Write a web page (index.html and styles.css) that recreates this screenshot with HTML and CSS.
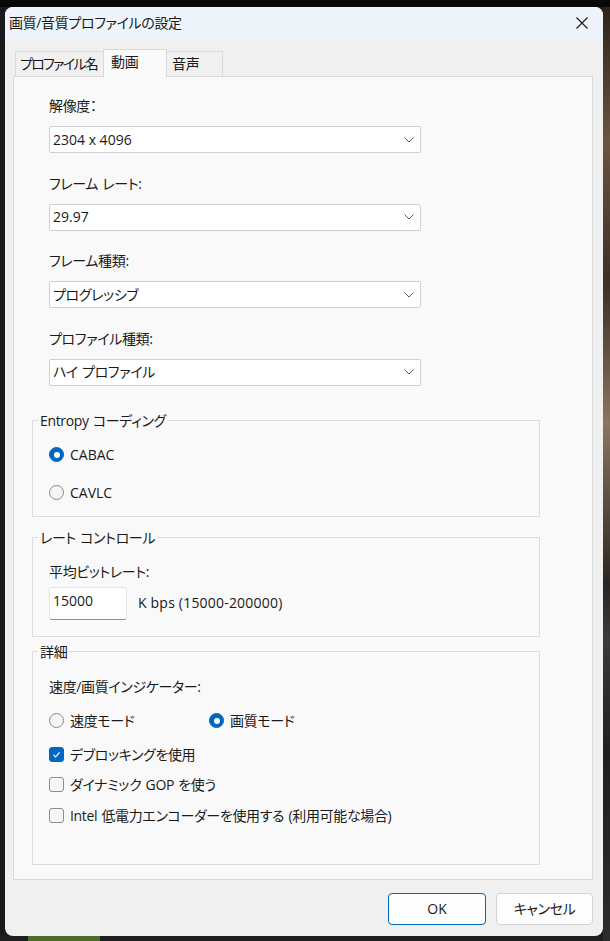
FILE: index.html
```html
<!DOCTYPE html>
<html lang="ja">
<head>
    <meta charset="UTF-8">
    <meta name="viewport" content="width=device-width, initial-scale=1.0">
    <title>画質/音質プロファイルの設定</title>
    <link rel="stylesheet" href="styles.css">
</head>
<body>
    <div class="window">
        <div class="titlebar">
            <span class="title">画質/音質プロファイルの設定</span>
            <svg class="close" width="12" height="12" viewBox="0 0 12 12">
                <path d="M0.5 0.5 L11.5 11.5 M11.5 0.5 L0.5 11.5" stroke="#1a1a1a" stroke-width="1.1" fill="none"/>
            </svg>
        </div>

        <div class="content">
            <div class="tabs">
                <div class="tab tab-profile">プロファイル名</div>
                <div class="tab tab-video active">動画</div>
                <div class="tab tab-audio">音声</div>
            </div>

            <div class="panel">
                <div class="field">
                    <div class="label">解像度：</div>
                    <div class="combo">
                        <span class="latin">2304 x 4096</span>
                        <svg width="10" height="6" viewBox="0 0 10 6"><path d="M0.5 0.5 L5 5 L9.5 0.5" stroke="#5c5c5c" fill="none"/></svg>
                    </div>
                </div>
                <div class="field">
                    <div class="label">フレーム レート:</div>
                    <div class="combo">
                        <span class="latin">29.97</span>
                        <svg width="10" height="6" viewBox="0 0 10 6"><path d="M0.5 0.5 L5 5 L9.5 0.5" stroke="#5c5c5c" fill="none"/></svg>
                    </div>
                </div>
                <div class="field">
                    <div class="label">フレーム種類:</div>
                    <div class="combo">
                        <span>プログレッシブ</span>
                        <svg width="10" height="6" viewBox="0 0 10 6"><path d="M0.5 0.5 L5 5 L9.5 0.5" stroke="#5c5c5c" fill="none"/></svg>
                    </div>
                </div>
                <div class="field">
                    <div class="label">プロファイル種類:</div>
                    <div class="combo">
                        <span>ハイ プロファイル</span>
                        <svg width="10" height="6" viewBox="0 0 10 6"><path d="M0.5 0.5 L5 5 L9.5 0.5" stroke="#5c5c5c" fill="none"/></svg>
                    </div>
                </div>

                <fieldset class="group group-entropy">
                    <legend>Entropy コーディング</legend>
                    <div class="option latin"><span class="radio on"></span>CABAC</div>
                    <div class="option latin second"><span class="radio"></span>CAVLC</div>
                </fieldset>

                <fieldset class="group group-rate">
                    <legend>レート コントロール</legend>
                    <div class="label">平均ビットレート:</div>
                    <div class="bitrate">
                        <div class="textbox latin">15000</div>
                        <span class="unit latin">K bps (15000-200000)</span>
                    </div>
                </fieldset>

                <fieldset class="group group-detail">
                    <legend>詳細</legend>
                    <div class="label">速度/画質インジケーター:</div>
                    <div class="radio-row">
                        <div class="option mode"><span class="radio"></span>速度モード</div>
                        <div class="option"><span class="radio on"></span>画質モード</div>
                    </div>
                    <div class="option check-1">
                        <span class="checkbox on">
                            <svg width="13" height="13" viewBox="0 0 13 13"><path d="M3.5 6.8 L5.6 8.9 L9.6 4.3" stroke="#fff" stroke-width="1.2" fill="none"/></svg>
                        </span>デブロッキングを使用</div>
                    <div class="option check-2"><span class="checkbox"></span>ダイナミック GOP を使う</div>
                    <div class="option check-3"><span class="checkbox"></span>Intel 低電力エンコーダーを使用する (利用可能な場合)</div>
                </fieldset>
            </div>

            <div class="actions">
                <div class="button default latin">OK</div>
                <div class="button cancel">キャンセル</div>
            </div>
        </div>
    </div>
</body>
</html>
```

FILE: styles.css
```css
html
{
    margin: 0;
    padding: 0;
}

body
{
    margin: 0;
    height: 941px;
    overflow: hidden;
    font-family: "Open Sans", "Noto Sans CJK JP", sans-serif;
    font-size: 14px;
    color: #1a1a1a;
    font-feature-settings: "palt";
    letter-spacing: -0.35px;
    word-spacing: 1px;
    background:
        linear-gradient(#080808, #080808) top left / 100% 7px no-repeat,
        linear-gradient(to bottom, #2a2018 0%, #6b5440 15%, #3d2f25 30%, #8a7560 45%, #2b2622 62%, #3a3a3a 68%, #1f1f1f 80%, #2c2c2c 100%) top right / 7px 100% no-repeat,
        linear-gradient(90deg, #1e1e1e 0, #1e1e1e 28px, #4c6b2a 28px, #4c6b2a 100px, #1e1e1e 100px) bottom left / 100% 5px no-repeat,
        #1a1a1a;
}

.latin
{
    letter-spacing: normal;
    word-spacing: normal;
}

.window
{
    width: 598px;
    height: 929px;
    margin: 7px 0 0 5px;
    border-radius: 8px;
    background-color: #f0f0f0;
    overflow: hidden;
}

.titlebar
{
    height: 32px;
    background-color: #eef4f9;
    display: flex;
    align-items: center;
    justify-content: space-between;
    padding: 0 15px 0 4px;
}

.title
{
    line-height: 20px;
}

.content
{
    padding: 10px 10px 0 8px;
}

.tabs
{
    display: flex;
    align-items: flex-end;
    height: 27px;
    padding-left: 2px;
}

.tab
{
    box-sizing: border-box;
    height: 25px;
    border: 1px solid #d9d9d9;
    border-bottom: none;
    background-color: #f0f0f0;
    line-height: 24px;
    padding-left: 5px;
    white-space: nowrap;
    overflow: hidden;
}

.tab + .tab
{
    margin-left: -1px;
}

.tab-profile
{
    width: 89px;
    padding-left: 4px;
    letter-spacing: -1.7px;
}

.tab-video { width: 64px; }
.tab-audio { width: 57px; }

.tab.active
{
    height: 28px;
    margin-bottom: -1px;
    background-color: #f9f9f9;
    position: relative;
    z-index: 1;
    padding-left: 7px;
    line-height: 24px;
}

.panel
{
    box-sizing: border-box;
    height: 804px;
    border: 1px solid #d9d9d9;
    background-color: #f9f9f9;
    padding: 19px 52px 0 18px;
}

.label
{
    line-height: 20px;
}

.field
{
    margin-left: 17px;
}

.field + .field
{
    margin-top: 20.5px;
}

.field .label
{
    margin-bottom: 10px;
}

.combo
{
    box-sizing: border-box;
    width: 372px;
    height: 27px;
    border: 1px solid #d0d0d0;
    border-radius: 2px;
    background-color: #fff;
    display: flex;
    align-items: center;
    justify-content: space-between;
    padding: 0 6px 0 3px;
    line-height: 20px;
}

.group
{
    margin: 0;
    border: 1px solid #dcdcdc;
    padding: 14px 16px 13px;
}

.group legend
{
    padding: 0 2px;
    margin-left: -11px;
    line-height: 20px;
}

.group-entropy
{
    margin-top: 25px;
}

.group-rate
{
    margin-top: 11px;
    padding-bottom: 16px;
}

.group-detail
{
    margin-top: 5px;
    padding-top: 15px;
    padding-bottom: 38px;
}

.option
{
    display: flex;
    align-items: center;
    gap: 6px;
    line-height: 20px;
}

.option.second
{
    margin-top: 18px;
}

.radio
{
    box-sizing: border-box;
    width: 15px;
    height: 15px;
    border-radius: 50%;
    border: 1px solid #8b8b8b;
    background-color: #f4f4f4;
    position: relative;
}

.radio.on
{
    background-color: #0067c0;
    border-color: #0067c0;
}

.radio.on::after
{
    content: "";
    position: absolute;
    left: 3.5px;
    top: 3.5px;
    width: 6px;
    height: 6px;
    border-radius: 50%;
    background-color: #fff;
}

.checkbox
{
    box-sizing: border-box;
    width: 15px;
    height: 15px;
    border-radius: 3px;
    border: 1px solid #8b8b8b;
    background-color: #f6f6f6;
    display: flex;
    align-items: center;
    justify-content: center;
}

.checkbox.on
{
    background-color: #0067c0;
    border-color: #0067c0;
}

.bitrate
{
    display: flex;
    align-items: center;
    margin-top: 5px;
}

.textbox
{
    box-sizing: border-box;
    width: 78px;
    height: 33px;
    background-color: #fff;
    border: 1px solid #e6e6e6;
    border-bottom-color: #8d8d8d;
    border-radius: 3px;
    padding: 3px 0 0 3px;
    line-height: 20px;
}

.unit
{
    margin-left: 11px;
    line-height: 20px;
    letter-spacing: 0.2px;
}

.radio-row
{
    display: flex;
    margin-top: 14px;
}

.option.mode
{
    width: 160px;
}

.check-1 { margin-top: 14px; }
.check-2 { margin-top: 10px; }
.check-3 { margin-top: 11px; }

.actions
{
    display: flex;
    justify-content: flex-end;
    gap: 10px;
    padding-top: 13px;
}

.button
{
    box-sizing: border-box;
    height: 32px;
    border: 1px solid #d3d3d3;
    border-radius: 4px;
    background-color: #fdfdfd;
    display: flex;
    align-items: center;
    justify-content: center;
    line-height: 20px;
}

.button.default
{
    width: 98px;
    border-color: #0067c0;
}

.button.cancel
{
    width: 97px;
}
```
